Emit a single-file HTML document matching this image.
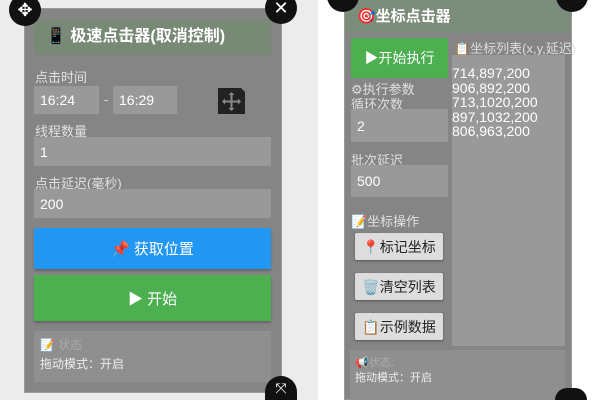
<!DOCTYPE html>
<html style="width:600px;height:400px;overflow:hidden"><head><meta charset="utf-8"><style>
*{margin:0;padding:0;box-sizing:border-box}
body{width:600px;height:400px;overflow:hidden;position:relative;background:#fff;font-family:"Liberation Sans","Noto Sans CJK SC",sans-serif;}
.a{position:absolute}
.lbl{position:absolute;color:#e0e0e0;font-size:13px}
.inp{position:absolute;background:#999;color:#fff;font-size:14px;padding-left:6px;display:flex;align-items:center}
.circ{position:absolute;width:32px;height:32px;border-radius:50%;background:#111;color:#fff;display:flex;align-items:center;justify-content:center;font-size:18px}
.btn2{position:absolute;left:355px;width:88px;height:27px;background:#ddd;border-radius:2px;box-shadow:0 1px 2px #555;color:#222;font-size:14px;display:flex;align-items:center;justify-content:center}
</style></head><body>
<div class="a" style="left:0;top:0;width:318px;height:400px;background:#ececec"></div>
<div class="a" style="left:24px;top:8px;width:258px;height:385px;background:#858585;border:1px solid #9a9a9a"></div>
<div class="a" style="left:34px;top:19px;width:237px;height:36px;background:#788a76;color:#fff;font-weight:bold;font-size:16px;line-height:36px;padding-left:12px">📱 极速点击器(取消控制)</div>
<div class="lbl" style="left:35px;top:67px">点击时间</div>
<div class="inp" style="left:34px;top:86px;width:65px;height:28px">16:24</div>
<div class="lbl" style="left:104px;top:92px">-</div>
<div class="inp" style="left:113px;top:86px;width:64px;height:28px">16:29</div>
<div class="a" style="left:218px;top:88px;width:27px;height:26px;background:#222;clip-path:polygon(0 0,85% 0,100% 15%,100% 100%,0 100%)">
<svg width="27" height="26" viewBox="0 0 27 26"><g stroke="#888" stroke-width="2" fill="none"><path d="M13.5 6v15M6 13.5h15"/></g><g fill="#888"><path d="M13.5 4l-3 3h6zM13.5 23l-3-3h6zM4 13.5l3-3v6zM23 13.5l-3-3v6z"/></g></svg></div>
<div class="lbl" style="left:35px;top:121px">线程数量</div>
<div class="inp" style="left:34px;top:137px;width:237px;height:29px">1</div>
<div class="lbl" style="left:35px;top:173px">点击延迟(毫秒)</div>
<div class="inp" style="left:34px;top:189px;width:237px;height:29px">200</div>
<div class="a" style="left:34px;top:228px;width:237px;height:41px;background:#2196f3;color:#fff;font-size:15px;display:flex;align-items:center;justify-content:center;box-shadow:0 2px 2px #666">📌 获取位置</div>
<div class="a" style="left:34px;top:275px;width:237px;height:46px;background:#4caf50;color:#fff;font-size:15px;display:flex;align-items:center;justify-content:center;box-shadow:0 2px 2px #666">▶ 开始</div>
<div class="a" style="left:34px;top:331px;width:237px;height:51px;background:#8f8f8f"></div>
<div class="a" style="left:40px;top:336px;color:#aaa;font-size:12px">📝 状态</div>
<div class="a" style="left:40px;top:355px;color:#eee;font-size:12px">拖动模式：开启</div>
<div class="circ" style="left:9px;top:-6px">✥</div>
<div class="circ" style="left:265px;top:-8px">✕</div>
<div class="circ" style="left:265px;top:376px;height:24px;border-radius:16px 16px 0 0;align-items:flex-start;padding-top:4px;font-size:14px">⤧</div>
<div class="a" style="left:344px;top:0;width:228px;height:400px;background:#858585;border:1px solid #9a9a9a"></div>
<div class="a" style="left:345px;top:0;width:226px;height:33px;background:#7c8c7a;color:#fff;font-weight:bold;font-size:15px;line-height:33px;padding-left:12px">🎯坐标点击器</div>
<div class="a" style="left:351px;top:38px;width:97px;height:40px;background:#4caf50;color:#fff;font-size:14px;display:flex;align-items:center;justify-content:center">▶开始执行</div>
<div class="a" style="left:454px;top:38px;color:#ddd;font-size:13px">📋坐标列表(x,y,延迟)</div>
<div class="a" style="left:452px;top:55px;width:113px;height:291px;background:#999"></div>
<div class="a" style="left:452px;top:66px;color:#fff;font-size:14px;line-height:14.6px">714,897,200<br>906,892,200<br>713,1020,200<br>897,1032,200<br>806,963,200</div>
<div class="lbl" style="left:351px;top:79px">⚙执行参数</div>
<div class="lbl" style="left:351px;top:94px">循环次数</div>
<div class="inp" style="left:351px;top:109px;width:97px;height:33px">2</div>
<div class="lbl" style="left:351px;top:150px">批次延迟</div>
<div class="inp" style="left:351px;top:165px;width:97px;height:32px">500</div>
<div class="lbl" style="left:351px;top:211px">📝坐标操作</div>
<div class="btn2" style="top:233px">📍标记坐标</div>
<div class="btn2" style="top:273px">🗑️清空列表</div>
<div class="btn2" style="top:313px">📋示例数据</div>
<div class="a" style="left:350px;top:350px;width:215px;height:50px;background:#8f8f8f"></div>
<div class="a" style="left:355px;top:354px;color:#aaa;font-size:11px">📢状态:</div>
<div class="a" style="left:355px;top:369px;color:#eee;font-size:11px">拖动模式：开启</div>
<div class="circ" style="left:327px;top:-20px"></div>
<div class="circ" style="left:556px;top:-20px"></div>
<div class="circ" style="left:555px;top:388px;height:12px;border-radius:16px 16px 0 0"></div>
</body></html>
